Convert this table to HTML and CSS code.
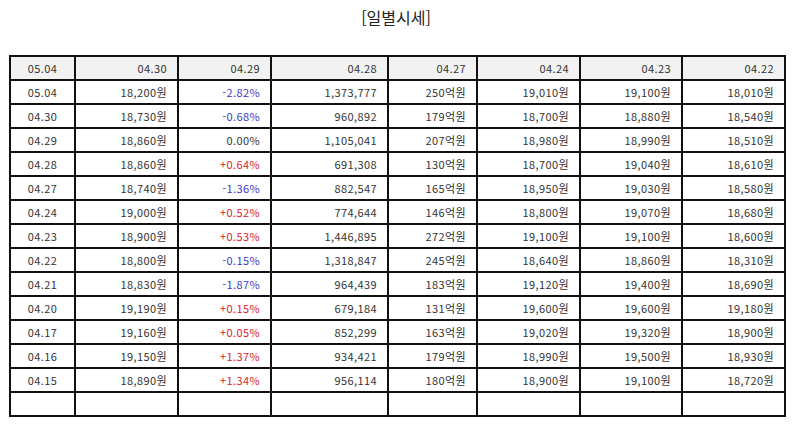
FILE: index.html
```html
<!DOCTYPE html>
<html lang="ko">
<head>
<meta charset="utf-8">
<link rel="stylesheet" href="styles.css">
</head>
<body>
<div class="page">
  <h1 class="title">[일별시세]</h1>
  <table class="grid">
    <colgroup>
      <col style="width:65px"><col style="width:103px"><col style="width:93px"><col style="width:117px">
      <col style="width:89px"><col style="width:103px"><col style="width:102px"><col style="width:103px">
    </colgroup>
    <thead>
      <tr><th class="c">05.04</th><th>04.30</th><th>04.29</th><th>04.28</th><th>04.27</th><th>04.24</th><th>04.23</th><th>04.22</th></tr>
    </thead>
    <tbody>
      <tr><td class="c">05.04</td><td>18,200원</td><td class="dn">-2.82%</td><td>1,373,777</td><td>250억원</td><td>19,010원</td><td>19,100원</td><td>18,010원</td></tr>
      <tr><td class="c">04.30</td><td>18,730원</td><td class="dn">-0.68%</td><td>960,892</td><td>179억원</td><td>18,700원</td><td>18,880원</td><td>18,540원</td></tr>
      <tr><td class="c">04.29</td><td>18,860원</td><td>0.00%</td><td>1,105,041</td><td>207억원</td><td>18,980원</td><td>18,990원</td><td>18,510원</td></tr>
      <tr><td class="c">04.28</td><td>18,860원</td><td class="up">+0.64%</td><td>691,308</td><td>130억원</td><td>18,700원</td><td>19,040원</td><td>18,610원</td></tr>
      <tr><td class="c">04.27</td><td>18,740원</td><td class="dn">-1.36%</td><td>882,547</td><td>165억원</td><td>18,950원</td><td>19,030원</td><td>18,580원</td></tr>
      <tr><td class="c">04.24</td><td>19,000원</td><td class="up">+0.52%</td><td>774,644</td><td>146억원</td><td>18,800원</td><td>19,070원</td><td>18,680원</td></tr>
      <tr><td class="c">04.23</td><td>18,900원</td><td class="up">+0.53%</td><td>1,446,895</td><td>272억원</td><td>19,100원</td><td>19,100원</td><td>18,600원</td></tr>
      <tr><td class="c">04.22</td><td>18,800원</td><td class="dn">-0.15%</td><td>1,318,847</td><td>245억원</td><td>18,640원</td><td>18,860원</td><td>18,310원</td></tr>
      <tr><td class="c">04.21</td><td>18,830원</td><td class="dn">-1.87%</td><td>964,439</td><td>183억원</td><td>19,120원</td><td>19,400원</td><td>18,690원</td></tr>
      <tr><td class="c">04.20</td><td>19,190원</td><td class="up">+0.15%</td><td>679,184</td><td>131억원</td><td>19,600원</td><td>19,600원</td><td>19,180원</td></tr>
      <tr><td class="c">04.17</td><td>19,160원</td><td class="up">+0.05%</td><td>852,299</td><td>163억원</td><td>19,020원</td><td>19,320원</td><td>18,900원</td></tr>
      <tr><td class="c">04.16</td><td>19,150원</td><td class="up">+1.37%</td><td>934,421</td><td>179억원</td><td>18,990원</td><td>19,500원</td><td>18,930원</td></tr>
      <tr><td class="c">04.15</td><td>18,890원</td><td class="up">+1.34%</td><td>956,114</td><td>180억원</td><td>18,900원</td><td>19,100원</td><td>18,720원</td></tr>
      <tr><td class="c"></td><td></td><td></td><td></td><td></td><td></td><td></td><td></td></tr>
    </tbody>
  </table>
</div>
</body>
</html>
```

FILE: styles.css
```css
html, body {
  margin: 0;
  padding: 0;
  background: #fff;
}
.page {
  padding: 6px 11px 0 9px;
  font-family: "Noto Sans CJK KR", "Noto Sans", sans-serif;
  color: #333;
}
.title {
  margin: 0 0 27px;
  font-size: 16px;
  font-weight: normal;
  line-height: 22px;
  text-align: center;
  color: #222;
}
.grid {
  border-collapse: collapse;
  table-layout: fixed;
  width: 775px;
  font-size: 11px;
  letter-spacing: 0.4px;
}
.grid th, .grid td {
  border: 2px solid #111;
  height: 22px;
  padding: 0 10px 0 0;
  text-align: right;
  font-weight: normal;
  white-space: nowrap;
  line-height: 14px;
}
.grid th {
  background: #f2f2f2;
}
.grid .c {
  text-align: center;
  padding: 0;
}
.up { color: #e0202a; }
.dn { color: #3a3ac8; }
```
